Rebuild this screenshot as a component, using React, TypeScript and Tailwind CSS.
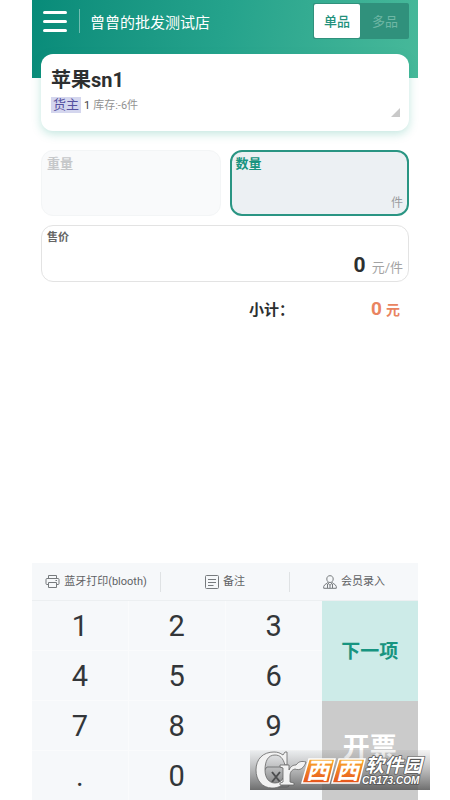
import React, { useState } from 'react';
import clsx from 'clsx';

const PrinterIcon = () => (
  <svg width="15" height="15" viewBox="0 0 15 15" fill="none" stroke="#777b7e" aria-hidden="true">
    <path d="M3.500 4.500v-3h8v3M3.500 10.500H2a1 1 0 0 1-1-1v-4a1 1 0 0 1 1-1h11a1 1 0 0 1 1 1v4a1 1 0 0 1-1 1h-1.500" />
    <path d="M3.500 8.500h8v5h-8zM10.500 6.500h1.500" />
  </svg>
);

const NoteIcon = () => (
  <svg width="14" height="14" viewBox="0 0 14 14" fill="none" stroke="#777b7e" aria-hidden="true">
    <rect x="0.500" y="0.500" width="13" height="13" rx="1" />
    <path d="M3 4.500h8M3 7.500h8M3 10.500h5.500" />
  </svg>
);

const MemberIcon = () => (
  <svg width="14" height="14" viewBox="0 0 14 14" fill="none" stroke="#777b7e" aria-hidden="true">
    <path d="M7 .7c2 0 3.200 1.300 3.200 3.300S8.900 7.500 7 7.500 3.800 6 3.800 4 5 .7 7 .7z" />
    <path d="M5 7.200c-.2 1.500-3.500 1.500-4.300 4.300v1.800h12.600v-1.800C12.500 8.700 9.200 8.700 9 7.200" />
    <path d="M4.500 9v4M9.500 9v4M5 8l2 2.500L9 8M7 10.500v2.800" />
  </svg>
);

const BackspaceIcon = () => (
  <svg width="32" height="22" viewBox="0 0 32 22" fill="none" stroke="#333639" aria-hidden="true">
    <path d="M9 1h20a2 2 0 0 1 2 2v16a2 2 0 0 1-2 2H9L1 11z" strokeOpacity="0.600" />
    <path d="m14 6 8 10M22 6l-8 10" strokeWidth="2" />
  </svg>
);

const tools = [
  { label: '蓝牙打印(blooth)', icon: <PrinterIcon /> },
  { label: '备注', icon: <NoteIcon /> },
  { label: '会员录入', icon: <MemberIcon /> },
];

const keys = ['1', '2', '3', '4', '5', '6', '7', '8', '9', '.', '0', 'del'];

const Header = () => {
  const [mode, setMode] = useState('单品');
  return (
    <header className="flex h-[78px] items-start justify-between bg-linear-100 from-[#078b79] via-[#25a38c] to-[#47b99a] pt-[3px] pr-[9px] pl-[11px]">
      <div className="flex h-9 items-center">
        <button type="button" aria-label="菜单" className="flex w-6 flex-col gap-[6px]">
          <span className="h-[3px] rounded-full bg-white" />
          <span className="h-[3px] rounded-full bg-white" />
          <span className="h-[3px] rounded-full bg-white" />
        </button>
        <div className="ml-3 h-6 w-px bg-white/40" />
        <h1 className="ml-2.5 pt-1 text-[15px] leading-6 text-white">曾曾的批发测试店</h1>
      </div>
      <div className="flex h-9 w-24 rounded-xs bg-[#30917c] text-[13px]">
        {['单品', '多品'].map((item) => (
          <button
            key={item}
            type="button"
            onClick={() => setMode(item)}
            className={clsx(
              'm-px flex-1 rounded-xs pt-0.5',
              mode === item ? 'bg-white font-medium text-[#23917c]' : 'text-[#6fb7a5]'
            )}
          >
            {item}
          </button>
        ))}
      </div>
    </header>
  );
};

const ProductCard = () => (
  <section className="-mt-6 flex h-[77px] items-end justify-between rounded-xl bg-white pr-[9px] pl-2.5 shadow-[0_3px_10px_rgba(20,160,130,0.25)]">
    <div className="h-full pt-3">
      <h2 className="text-[20px] leading-7 font-bold text-[#2d2f30]">苹果sn1</h2>
      <p className="flex items-center text-[11px] leading-5 text-[#929292]">
        <span className="bg-[#d4d6ee] px-0.5 text-[13px] leading-4 text-[#55509f]">货主</span>
        <span className="ml-[3px] pt-0.5 text-[#444]">1</span>
        <span className="ml-[3px] pt-0.5">库存:-6件</span>
      </p>
    </div>
    <svg width="9" height="9" viewBox="0 0 9 9" className="mb-3.5" aria-hidden="true">
      <path d="M9 0v9H0z" fill="#c9c9c9" />
    </svg>
  </section>
);

const SaleForm = () => (
  <form className="mt-[19px]">
    <div className="grid grid-cols-2 gap-[9px]">
      <div className="flex h-[66px] flex-col rounded-xl border border-[#f3f5f6] bg-[#f9fafb] px-[5px] pt-[5px]">
        <label htmlFor="weight" className="text-[13px] leading-4 font-bold text-[#c6c8ca]">
          重量
        </label>
        <input id="weight" disabled className="w-full flex-1" />
      </div>
      <div className="flex h-[66px] flex-col rounded-xl border-2 border-[#2a9583] bg-[#ecf0f3] px-1 pt-1 pb-[3px]">
        <label htmlFor="amount" className="text-[13px] leading-4 font-bold text-[#179480]">
          数量
        </label>
        <div className="flex flex-1 items-end">
          <input id="amount" className="h-5 w-0 flex-1 text-right outline-none" />
          <span className="text-[12px] leading-4 text-[#9b9d9f]">件</span>
        </div>
      </div>
    </div>
    <div className="mt-[9px] flex h-[57px] flex-col rounded-xl border border-[#e3e3e3] px-[5px] pt-1 pb-[3px]">
      <label htmlFor="price" className="text-[11px] leading-4 font-bold text-[#666]">
        售价
      </label>
      <div className="flex flex-1 items-end gap-1.5">
        <input
          id="price"
          defaultValue="0"
          className="h-6 w-0 flex-1 text-right text-[21px] font-bold text-[#2d2f30] outline-none"
        />
        <span className="text-[13px] leading-5 text-[#a3a3a3]">元/件</span>
      </div>
    </div>
    <p className="mt-[15px] flex items-center justify-between pr-[9px] leading-6 font-bold">
      <span className="ml-auto w-[122px] text-[15px] text-[#2d2f30]">小计：</span>
      <span className="text-[#e98460]">
        <span className="text-[19px]">0</span>
        <span className="ml-1 text-[14px]">元</span>
      </span>
    </p>
  </form>
);

const Keypad = () => (
  <section className="mt-auto bg-[#f6f8fa]">
    <div className="flex h-[38px] items-center border-b border-[#eceff1]">
      {tools.map(({ label, icon }, index) => (
        <button
          key={label}
          type="button"
          className={clsx(
            'flex h-5 flex-1 items-center justify-center gap-1 text-[11px] whitespace-nowrap text-[#5f6265]',
            index > 0 && 'border-l border-[#dfe2e4]'
          )}
        >
          {icon}
          <span className="pt-0.5">{label}</span>
        </button>
      ))}
    </div>
    <div className="grid grid-cols-4">
      <div className="col-span-3 grid auto-rows-[49px] grid-cols-3 gap-px bg-[#fafbfc]">
        {keys.map((key) => (
          <button
            key={key}
            type="button"
            aria-label={key === 'del' ? '删除' : undefined}
            className="flex items-center justify-center bg-[#f6f8fa] pt-0.5 text-[29px] leading-none text-[#333639]"
          >
            {key === 'del' ? <BackspaceIcon /> : key}
          </button>
        ))}
      </div>
      <div className="grid grid-rows-2">
        <button type="button" className="bg-[#cdebe8] pt-0.5 text-[19px] font-bold text-[#179480]">
          下一项
        </button>
        <button type="button" className="bg-[#cbcbcb] pb-1 text-[27px] font-bold text-white">
          开票
        </button>
      </div>
    </div>
  </section>
);

const SiteBadge = () => (
  <svg
    width="180"
    height="40"
    viewBox="0 0 180 40"
    role="img"
    aria-label="西西软件园"
    className="pointer-events-none absolute right-5 bottom-2.5 overflow-visible"
  >
    <defs>
      <linearGradient id="band" x1="0" y1="0" x2="0" y2="1">
        <stop offset="0" stopColor="#777" stopOpacity="0.080" />
        <stop offset="0.500" stopColor="#666" stopOpacity="0.450" />
        <stop offset="1" stopColor="#555" stopOpacity="0.850" />
      </linearGradient>
      <linearGradient id="tile" x1="0" y1="0" x2="0" y2="1">
        <stop offset="0" stopColor="#fbab2c" />
        <stop offset="1" stopColor="#e5521c" />
      </linearGradient>
    </defs>
    <rect width="180" height="40" fill="url(#band)" />
    {/* swirl mark: open ring, stem and leaf */}
    <g fill="#f2f2f2" stroke="#666" strokeWidth="0.800">
      <path
        fillRule="evenodd"
        d="M37 2v13h-2C33 8 30 5 25 5c-7 0-10 6-10 15 0 8 4 13 10 13 4 0 7-2 8-5l2 4c-3 4-7 6-13 6C12 38 6 30 6 20 6 9 13 2 24 2c4 0 6 1 9 3l2-3z"
      />
      <path d="M30 15h9v5c2-4 4-5 7-5 3-4 6-4 10-3-2 6-6 9-11 7-4 1-5 4-5 7v6l4 1v2H30v-2l3-1V18l-3-1z" />
    </g>
    <g stroke="#fff" strokeWidth="1.500" fill="url(#tile)">
      <path d="M59 9h26l-6 24H52z" />
      <path d="M89 9h26l-6 24H82z" />
    </g>
    <g
      fill="#fff"
      className="font-['Noto_Sans_CJK_SC',sans-serif] font-bold italic"
    >
      <text x="56" y="29" fontSize="23">西</text>
      <text x="86" y="29" fontSize="23">西</text>
      <g stroke="#555" strokeWidth="1.500" paintOrder="stroke" strokeLinejoin="round">
        <text x="115" y="22" fontSize="19">软件园</text>
      </g>
    </g>
    <text
      x="112"
      y="34"
      fontSize="10"
      fill="#fff"
      stroke="#555"
      strokeWidth="1.500"
      paintOrder="stroke"
      className="font-['Liberation_Sans',sans-serif] font-bold italic"
    >
      CR173.COM
    </text>
  </svg>
);

export default function App() {
  return (
    <div className="relative min-h-screen bg-white px-8 font-[Roboto,'Noto_Sans_CJK_SC',sans-serif]">
      <main className="flex min-h-screen flex-col">
        <Header />
        <div className="px-[9px]">
          <ProductCard />
          <SaleForm />
        </div>
        <Keypad />
      </main>
      <SiteBadge />
    </div>
  );
}
